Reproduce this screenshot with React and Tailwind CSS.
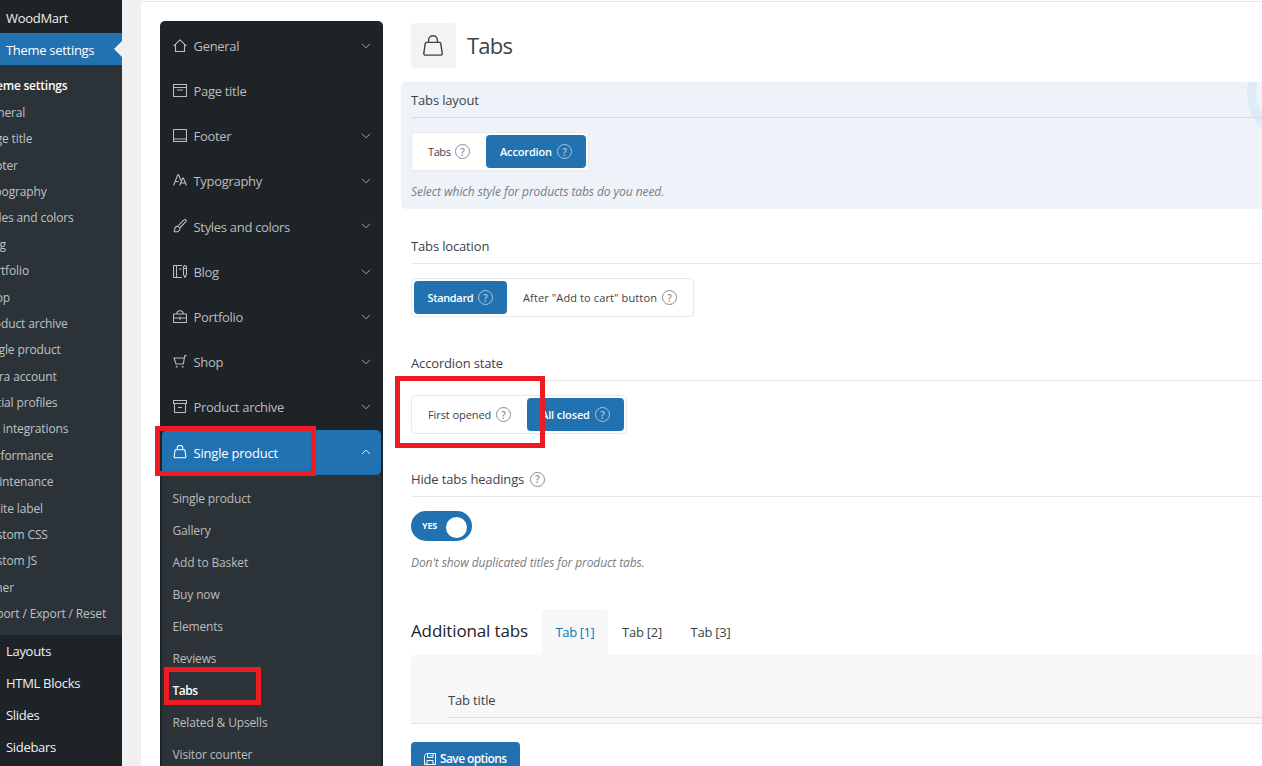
import { useState } from "react";

const adminSubmenu = [
  "Theme settings",
  "General",
  "Page title",
  "Footer",
  "Typography",
  "Styles and colors",
  "Blog",
  "Portfolio",
  "Shop",
  "Product archive",
  "Single product",
  "Extra account",
  "Social profiles",
  "API integrations",
  "Performance",
  "Maintenance",
  "White label",
  "Custom CSS",
  "Custom JS",
  "Other",
  "Import / Export / Reset",
];

const adminBottom = ["Layouts", "HTML Blocks", "Slides", "Sidebars"];

const icons = {
  home: <path d="M.5 7.200 7 .8l6.500 6.400M2.500 5.800v6.700h9V5.800" />,
  page: <path d="M.5.5h13v12H.5zM.5 3.500h13M4 6h6" />,
  footer: <path d="M.5.5h13v12H.5zM.5 10h13" />,
  type: <path d="M.5 11.500 4.800.8h.7L8 6.500M2.500 7.500h3M6.500 11.500l3.200-7.500h.6l3.200 7.500M7.700 9h4.700" />,
  brush: (
    <>
      <path d="M5.300 6.700 11 .9c1.300-1 2.800.4 1.900 1.700L7.300 8.500" />
      <path d="M1 12.500c1.200-.5.2-2.500 1.200-4.200 1.500-2 5-.5 4.800 1.700-.2 2.500-3.500 3.400-6 2.500z" />
    </>
  ),
  blog: (
    <>
      <path d="M9 .5H.5v12H9M3.500.5v12M6 4h2.500" />
      <path d="M10.500 2.500c0-2.500 3-2.500 3 0v7L12 12.500l-1.500-3zM10.500 3.500h3" />
    </>
  ),
  portfolio: (
    <>
      <path d="M.5 4h13v8.500H.5zM.5 8h13M7 6.500V10" />
      <path d="M3.800 4c0-4.300 6.400-4.300 6.400 0" />
    </>
  ),
  cart: (
    <>
      <path d="M13.500.6h-1.700L10.300 9H3L1 3h10.300" />
      <path d="M2.800 11h1.700v1.500H2.800zM8.800 11h1.700v1.500H8.800z" fill="currentColor" stroke="none" />
    </>
  ),
  archive: <path d="M.5.5h13v3H.5zM1.500 3.500v9h11v-9M5 7.500h4" />,
  bag: (
    <>
      <path d="M2.700 4.700h8.600l.6.5 1 6.800-.6.800H1.700l-.6-.8 1-6.800z" />
      <path d="M4.200 4.700V3.300a2.800 2.800 0 0 1 5.600 0v1.400" />
    </>
  ),
};

const navItems = [
  { label: "General", icon: "home", arrow: true },
  { label: "Page title", icon: "page" },
  { label: "Footer", icon: "footer", arrow: true },
  { label: "Typography", icon: "type", arrow: true },
  { label: "Styles and colors", icon: "brush", arrow: true },
  { label: "Blog", icon: "blog", arrow: true },
  { label: "Portfolio", icon: "portfolio", arrow: true },
  { label: "Shop", icon: "cart", arrow: true },
  { label: "Product archive", icon: "archive", arrow: true },
];

const productItems = [
  "Single product",
  "Gallery",
  "Add to Basket",
  "Buy now",
  "Elements",
  "Reviews",
  "Tabs",
  "Related & Upsells",
  "Visitor counter",
];

const Icon = ({ name, className = "size-3.5", strokeWidth = 1.1 }) => (
  <svg
    viewBox="0 0 14 14"
    fill="none"
    stroke="currentColor"
    strokeWidth={strokeWidth}
    strokeLinejoin="round"
    className={`shrink-0 ${className}`}
  >
    {icons[name]}
  </svg>
);

const Chevron = ({ up }) => (
  <svg viewBox="0 0 10 6" fill="none" stroke="currentColor" className="h-1.5 w-2.5 opacity-85">
    <path d={up ? "M1 5l4-4 4 4" : "M1 .8l4 4 4-4"} />
  </svg>
);

const Help = () => (
  <span className="flex size-[15px] items-center justify-center rounded-full border border-current text-[10px] leading-none font-semibold tracking-normal opacity-60">
    ?
  </span>
);

const AdminMenu = () => (
  <aside className="h-full w-[122px] shrink-0 overflow-hidden bg-[#1d2327] pt-px text-[13px] tracking-[-0.3px] whitespace-nowrap text-[#f0f0f1]">
    <div className="flex h-8 items-center pt-[3px] pl-1.5">WoodMart</div>
    <div className="flex h-8 items-center justify-between bg-[#2271b1] pl-1.5 text-white">
      <span className="pt-[3px]">Theme settings</span>
      <span className="border-y-8 border-r-8 border-y-transparent border-r-[#f0f0f1]" />
    </div>
    <ul className="h-[570px] bg-[#2c3338] pt-[8.200px] text-[12px] tracking-[-0.13px] text-[#bfc2c4]">
      {adminSubmenu.map((item, i) => (
        <li
          key={item}
          className={`-ml-[18px] flex h-[26.400px] items-center ${
            i === 0 ? "font-semibold tracking-[-0.22px] text-white" : ""
          }`}
        >
          {item}
        </li>
      ))}
    </ul>
    {adminBottom.map((item) => (
      <div key={item} className="flex h-8 items-center pt-0.5 pl-1.5">
        {item}
      </div>
    ))}
  </aside>
);

const SettingsNav = () => (
  <nav className="mt-[19px] ml-[19px] w-[223px] shrink-0 rounded-t-[5px] bg-[#1d2327] px-0.5 pt-0.5 text-[13px] tracking-[-0.3px] text-[#bbbdbe]">
    {navItems.map(({ label, icon, arrow }) => (
      <div key={label} className="flex h-[45.200px] items-center pr-2.5 pl-[10.500px]">
        <Icon name={icon} />
        <span className="grow pt-0.5 pl-[7px]">{label}</span>
        {arrow && <Chevron />}
      </div>
    ))}
    <div className="relative z-10 flex h-[45.200px] items-center rounded-[5px] bg-[#2271b1] pr-2.5 pl-[10.500px] text-white">
      <Icon name="bag" />
      <span className="grow pt-0.5 pl-[7px] tracking-[-0.2px]">Single product</span>
      <Chevron up />
      <span className="absolute -top-1 -left-[7px] h-[50px] w-[161px] border-5 border-[#ed1c24]" />
    </div>
    <ul className="-mt-1 bg-[#2c3338] pt-3 text-[12px] tracking-[-0.15px]">
      {productItems.map((item) => (
        <li
          key={item}
          className={`relative flex h-8 items-center pl-[10.500px] ${
            item === "Tabs" ? "font-semibold tracking-[-0.5px] text-white" : ""
          }`}
        >
          <span className="pt-px">{item}</span>
          {item === "Tabs" && (
            <span className="absolute -top-[8px] left-0.5 h-[38px] w-[97px] border-5 border-[#ed1c24]" />
          )}
        </li>
      ))}
    </ul>
  </nav>
);

const ButtonSet = ({ options, value, onChange }) => (
  <div className="mt-3.5 flex h-[39px] w-fit rounded-[4px] border border-[#e8e9ea] bg-white p-0.5 text-[11px]">
    {options.map(({ label, width }) => (
      <button
        key={label}
        onClick={() => onChange(label)}
        className={`flex items-center rounded-[4px] whitespace-nowrap ${width} ${
          value === label ? "bg-[#2271b1] font-semibold text-white" : "text-[#3c434a]"
        }`}
      >
        <span className="grow pt-0.5 text-left">{label}</span>
        <Help />
      </button>
    ))}
  </div>
);

const Label = ({ children, help, className = "border-[#e8e9ea]" }) => (
  <div
    className={`flex h-[35px] items-center gap-1.5 border-b text-[13px] font-medium tracking-[-0.15px] text-[#3c434a] ${className}`}
  >
    <span className="pt-0.5">{children}</span>
    {help && <Help />}
  </div>
);

const Content = () => {
  const [layout, setLayout] = useState("Accordion");
  const [location, setLocation] = useState("Standard");
  const [state, setState] = useState("All closed");

  return (
    <main className="ml-[18px] min-w-0 grow pt-[21px]">
      <header className="ml-2.5 flex h-[45px] items-center gap-[11px]">
        <span className="flex size-[45px] items-center justify-center rounded-[4px] bg-[#f3f3f3] text-[#3c434a]">
          <Icon name="bag" className="-ml-px size-[22px]" strokeWidth={0.9} />
        </span>
        <h1 className="text-[22px] font-medium tracking-[-0.8px] text-[#3c434a]">Tabs</h1>
      </header>

      <section className="relative mt-3.5 h-[127px] overflow-hidden rounded-l-[5px] bg-[#eef3fa] pt-px pl-2.5">
        <span className="absolute -top-[43px] left-[846px] size-[106px] rounded-full border-9 border-[#dcebf4]" />
        <Label className="relative border-[#cbe1ee]">Tabs layout</Label>
        <ButtonSet
          value={layout}
          onChange={setLayout}
          options={[
            { label: "Tabs", width: "w-[72px] pl-3.5 pr-[16px] tracking-[-0.4px]" },
            { label: "Accordion", width: "w-[100px] pl-3.5 pr-[14px] tracking-[-0.15px]" },
          ]}
        />
        <p className="mt-3 text-[12px] tracking-[-0.07px] text-[#787c82] italic">
          Select which style for products tabs do you need.
        </p>
      </section>

      <div className="pl-2.5">
        <section className="mt-5">
          <Label>Tabs location</Label>
          <ButtonSet
            value={location}
            onChange={setLocation}
            options={[
              { label: "Standard", width: "w-[93px] pl-[13.500px] pr-[14px] tracking-[-0.35px]" },
              { label: 'After "Add to cart" button', width: "w-[184px] pl-[16px] pr-[14px] tracking-[0.12px]" },
            ]}
          />
        </section>

        <section className="relative mt-[29px]">
          <Label>Accordion state</Label>
          <ButtonSet
            value={state}
            onChange={setState}
            options={[
              { label: "First opened", width: "w-[113px] pl-3.5 pr-[16px] tracking-[-0.08px]" },
              { label: "All closed", width: "w-[97px] pl-3.5 pr-[14px] tracking-[-0.12px]" },
            ]}
          />
          <span className="absolute top-[30px] -left-4 h-[72px] w-[150px] border-5 border-[#ed1c24]" />
        </section>

        <section className="mt-7">
          <Label help>Hide tabs headings</Label>
          <div className="mt-3.5 flex h-[30px] w-[61px] items-center justify-between rounded-full bg-[#2271b1] pr-[5px] pl-[11px] text-[9px] font-bold tracking-[-0.2px] text-white">
            YES
            <span className="mt-0.5 size-[21px] rounded-full bg-white" />
          </div>
          <p className="mt-[13px] text-[12px] tracking-[-0.1px] text-[#787c82] italic">
            Don't show duplicated titles for product tabs.
          </p>
        </section>

        <section className="mt-[37px]">
          <div className="flex h-[46px] items-center text-[13px] tracking-[-0.25px] text-[#3c434a]">
            <h2 className="w-[131px] pb-0.5 text-[17px] font-medium tracking-[-0.13px] text-[#1d2327]">
              Additional tabs
            </h2>
            <span className="flex h-full w-[66px] items-center justify-center rounded-t-[5px] bg-[#f7f7f7] pt-0.5 font-medium tracking-[-0.4px] text-[#007cba]">
              Tab [1]
            </span>
            <span className="w-[68px] pt-0.5 text-center">Tab [2]</span>
            <span className="w-[69px] pt-0.5 text-center">Tab [3]</span>
          </div>
          <div className="h-[69px] rounded-tl-[4px] border-b border-[#e5e5e5] bg-[#f7f7f7] pt-7 pl-[37px]">
            <Label className="h-9 border-[#dddddd]">Tab title</Label>
          </div>
        </section>

        <button className="mt-[18px] flex h-[34px] w-[109px] items-center gap-1 rounded-[4px] bg-[#2271b1] pl-[13px] text-[12px] font-semibold tracking-[-0.6px] whitespace-nowrap text-white">
          <svg viewBox="0 0 12 12" fill="none" stroke="currentColor" className="-mt-px size-3 shrink-0">
            <path d="M2.500.5h9v11h-11v-9zM3.500.5v4h5.500v-4M3 11.500v-4h6v4M7 2v1.500" />
          </svg>
          Save options
        </button>
      </div>
    </main>
  );
};

const App = () => (
  <div className="flex h-[766px] w-[1262px] overflow-hidden bg-[#f0f0f1] font-['Open_Sans','Noto_Sans',sans-serif]">
    <AdminMenu />
    <div className="ml-[19px] flex h-full min-w-0 grow flex-col overflow-hidden bg-white pt-px">
      <div className="flex grow border-t border-[#e8e9ea]">
        <SettingsNav />
        <Content />
      </div>
    </div>
  </div>
);

export default App;
